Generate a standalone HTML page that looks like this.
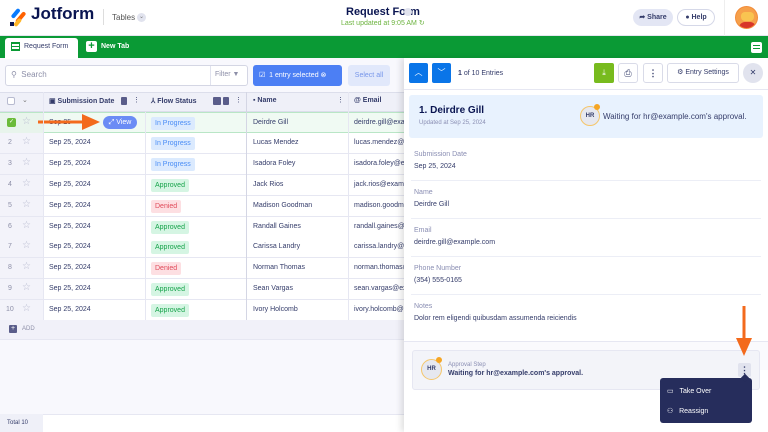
<!DOCTYPE html>
<html><head><meta charset="utf-8">
<style>
*{margin:0;padding:0;box-sizing:border-box}
body{width:768px;height:432px;overflow:hidden;position:relative;font-family:"Liberation Sans",sans-serif;background:#f8f8fd;color:#343c6a}
.a{position:absolute}
.t{font-size:7px;color:#343c6a;white-space:nowrap}
.row{position:absolute;left:0;width:420px;height:21px;border-bottom:1px solid #e6e7f2;background:#fff}
.row div{position:absolute;top:0;height:20px;line-height:20px;font-size:7px;white-space:nowrap}
.num{left:0;width:43px;background:#f3f3fa;color:#8d8fa8}
.num span{position:absolute;left:8px}
.num .star{left:22px;top:-1px;color:#b8bbd0;font-size:10px}
.pill{top:4px!important;height:13px!important;line-height:13px!important;padding:0 4px;border-radius:2px;font-size:7px}
.ip{background:#dbeafe;color:#4a8df5}
.ap{background:#d5f5e3;color:#16a34a}
.dn{background:#fddfe2;color:#e04b5a}
.lbl{font-size:7px;color:#8a8eb3}
.val{font-size:7px;color:#343c6a}
.hr{position:absolute;left:411px;width:350px;height:1px;background:#eceef6}
.btn{position:absolute;border:1px solid #d9dbe8;border-radius:3px;background:#fff}
</style></head><body>
<div class="a" style="left:0;top:0;width:768px;height:36px;background:#fff;border-bottom:1px solid #e5e6ef"></div>
<svg class="a" style="left:9px;top:7px" width="18" height="20" viewBox="0 0 18 20">
<rect x="5" y="1" width="4" height="11" rx="2" transform="rotate(40 7 6)" fill="#0a7cff"/>
<rect x="10" y="4" width="4" height="13" rx="2" transform="rotate(40 12 10)" fill="#ff6100"/>
<rect x="7" y="11" width="4" height="9" rx="2" transform="rotate(40 9 15)" fill="#ffb629"/>
<rect x="1" y="15" width="4" height="4" fill="#0a1551"/>
</svg>
<div class="a" style="left:31px;top:4px;font-size:17px;font-weight:bold;color:#0a1551">Jotform</div>
<div class="a" style="left:103px;top:9px;width:1px;height:16px;background:#ddd"></div>
<div class="a t" style="left:112px;top:13px;font-size:8px;color:#555">Tables</div>
<div class="a" style="left:137px;top:13px;width:9px;height:9px;border-radius:50%;background:#e1e3ee;font-size:6px;text-align:center;color:#777;line-height:9px">⌄</div>
<div class="a" style="left:346px;top:6px;font-size:11px;font-weight:bold;color:#0a1551">Request Form</div>
<div class="a" style="left:404px;top:8px;width:8px;height:8px;border-radius:50%;background:#e1e3ee"></div>
<div class="a" style="left:341px;top:19px;font-size:7px;color:#6cb33f">Last updated at 9:05 AM ↻</div>
<div class="a" style="left:633px;top:9px;width:40px;height:17px;border-radius:9px;background:#e3e6f4;font-size:7px;font-weight:bold;color:#343c6a;line-height:17px;text-align:center">➦ Share</div>
<div class="a" style="left:677px;top:9px;width:38px;height:17px;border-radius:9px;background:#fff;border:1px solid #d5d8e8;font-size:7px;font-weight:bold;color:#343c6a;line-height:15px;text-align:center">● Help</div>
<div class="a" style="left:724px;top:0;width:1px;height:36px;background:#eee"></div>
<div class="a" style="left:735px;top:6px;width:23px;height:23px;border-radius:50%;background:#f6a04a;border:1px solid #f28c3a;overflow:hidden"><div style="margin:5px 0 0 5px;width:13px;height:9px;background:#f9c451;border-radius:4px"></div><div style="margin:1px 0 0 3px;width:17px;height:8px;background:#d8352a;border-radius:6px 6px 0 0"></div></div>
<div class="a" style="left:0;top:36px;width:768px;height:22px;background:#0a9a35"></div>
<div class="a" style="left:5px;top:38px;width:73px;height:21px;background:#fff;border-radius:3px 3px 0 0"></div>
<div class="a" style="left:11px;top:42px;width:9px;height:9px;border:1px solid #0a9a35;background:repeating-linear-gradient(0deg,#0a9a35 0 1px,#fff 1px 3px)"></div>
<div class="a t" style="left:24px;top:43px;font-size:7px">Request Form</div>
<div class="a" style="left:86px;top:41px;width:11px;height:11px;background:#fff;border-radius:2px;color:#0a9a35;font-size:11px;line-height:10px;text-align:center;font-weight:bold">+</div>
<div class="a" style="left:101px;top:43px;font-size:7px;color:#fff;font-weight:bold">New Tab</div>
<div class="a" style="left:751px;top:42px;width:11px;height:11px;border-radius:2px;background:repeating-linear-gradient(0deg,#fff 0 2px,#0a9a35 2px 3px);border:2px solid #fff"></div>
<div class="a" style="left:5px;top:65px;width:243px;height:21px;background:#fff;border:1px solid #d4d6e4;border-radius:3px"></div>
<div class="a t" style="left:11px;top:70px;font-size:8px;color:#8d8fa8">⚲ &nbsp;Search</div>
<div class="a" style="left:210px;top:66px;width:1px;height:19px;background:#e0e2ee"></div>
<div class="a t" style="left:215px;top:71px;color:#8d8fa8">Filter ▼</div>
<div class="a" style="left:253px;top:65px;width:89px;height:21px;background:#4c7ff4;border-radius:3px"></div>
<div class="a" style="left:259px;top:71px;font-size:7px;color:#fff">☑ &nbsp;1 entry selected ⊗</div>
<div class="a" style="left:348px;top:65px;width:42px;height:21px;background:#e1e8fb;border-radius:3px;font-size:7px;color:#7796ea;line-height:21px;text-align:center">Select all</div>
<div class="a" style="left:0;top:92px;width:420px;height:20px;background:#eff0f8;border-bottom:1px solid #dcdeeb;border-top:1px solid #dcdeeb"></div>
<div class="a" style="left:7px;top:97px;width:8px;height:8px;border:1px solid #b8bbd0;border-radius:2px;background:#fff"></div>
<div class="a t" style="left:22px;top:96px;color:#777">⌄</div>
<div class="a t" style="left:49px;top:97px;font-weight:bold">▣ Submission Date</div>
<div class="a" style="left:121px;top:97px;width:6px;height:8px;background:#5a5d8a;border-radius:1px"></div>
<div class="a t" style="left:133px;top:96px">⋮</div>
<div class="a t" style="left:151px;top:97px;font-weight:bold">⅄ Flow Status</div>
<div class="a" style="left:213px;top:97px;width:8px;height:8px;background:#5a5d8a;border-radius:1px"></div>
<div class="a" style="left:223px;top:97px;width:6px;height:8px;background:#5a5d8a;border-radius:1px"></div>
<div class="a t" style="left:235px;top:96px">⋮</div>
<div class="a t" style="left:253px;top:97px;font-weight:bold">▪ Name</div>
<div class="a t" style="left:337px;top:96px">⋮</div>
<div class="a t" style="left:354px;top:97px;font-weight:bold">@ Email</div>
<div class="row" style="top:112px;background:#f0faf3;border-top:1px solid #b9e6c6;border-bottom:1px solid #b9e6c6"><div class="num" style="background:#e8f4ec"><span style="left:7px;top:5px;width:9px;height:9px;background:#6bbb3a;border-radius:2px;line-height:9px;color:#fff;text-align:center;font-size:6px">✓</span><span class="star">☆</span></div><div style="left:49px;color:#343c6a">Sep 25</div><div class="pill ip" style="left:151px">In Progress</div><div style="left:253px">Deirdre Gill</div><div style="left:354px">deirdre.gill@example.com</div></div>
<div class="a" style="left:103px;top:116px;width:34px;height:13px;border-radius:7px;background:#6b8cf5;color:#fff;font-size:7px;line-height:13px;text-align:center">⤢ View</div>
<svg class="a" style="left:38px;top:114px" width="62" height="16"><rect x="0" y="6.5" width="46" height="3" fill="#f36a1c"/><polygon points="44,0 62,8 44,16" fill="#f36a1c"/></svg>
<div class="row" style="top:133px"><div class="num"><span>2</span><span class="star">☆</span></div><div style="left:49px">Sep 25, 2024</div><div class="pill ip" style="left:151px">In Progress</div><div style="left:253px">Lucas Mendez</div><div style="left:354px">lucas.mendez@example.com</div></div>
<div class="row" style="top:154px"><div class="num"><span>3</span><span class="star">☆</span></div><div style="left:49px">Sep 25, 2024</div><div class="pill ip" style="left:151px">In Progress</div><div style="left:253px">Isadora Foley</div><div style="left:354px">isadora.foley@example.com</div></div>
<div class="row" style="top:175px"><div class="num"><span>4</span><span class="star">☆</span></div><div style="left:49px">Sep 25, 2024</div><div class="pill ap" style="left:151px">Approved</div><div style="left:253px">Jack Rios</div><div style="left:354px">jack.rios@example.com</div></div>
<div class="row" style="top:196px"><div class="num"><span>5</span><span class="star">☆</span></div><div style="left:49px">Sep 25, 2024</div><div class="pill dn" style="left:151px">Denied</div><div style="left:253px">Madison Goodman</div><div style="left:354px">madison.goodman@example</div></div>
<div class="row" style="top:217px"><div class="num"><span>6</span><span class="star">☆</span></div><div style="left:49px">Sep 25, 2024</div><div class="pill ap" style="left:151px">Approved</div><div style="left:253px">Randall Gaines</div><div style="left:354px">randall.gaines@example</div></div>
<div class="row" style="top:237px"><div class="num"><span>7</span><span class="star">☆</span></div><div style="left:49px">Sep 25, 2024</div><div class="pill ap" style="left:151px">Approved</div><div style="left:253px">Carissa Landry</div><div style="left:354px">carissa.landry@example</div></div>
<div class="row" style="top:258px"><div class="num"><span>8</span><span class="star">☆</span></div><div style="left:49px">Sep 25, 2024</div><div class="pill dn" style="left:151px">Denied</div><div style="left:253px">Norman Thomas</div><div style="left:354px">norman.thomas@example</div></div>
<div class="row" style="top:279px"><div class="num"><span>9</span><span class="star">☆</span></div><div style="left:49px">Sep 25, 2024</div><div class="pill ap" style="left:151px">Approved</div><div style="left:253px">Sean Vargas</div><div style="left:354px">sean.vargas@example.com</div></div>
<div class="row" style="top:300px"><div class="num"><span style="left:6px">10</span><span class="star">☆</span></div><div style="left:49px">Sep 25, 2024</div><div class="pill ap" style="left:151px">Approved</div><div style="left:253px">Ivory Holcomb</div><div style="left:354px">ivory.holcomb@example.com</div></div>
<div class="a" style="left:145px;top:112px;width:1px;height:208px;background:#e6e7f2"></div>
<div class="a" style="left:246px;top:92px;width:1px;height:228px;background:#d4d6e4"></div>
<div class="a" style="left:348px;top:92px;width:1px;height:228px;background:#e6e7f2"></div>
<div class="a" style="left:43px;top:92px;width:1px;height:228px;background:#e6e7f2"></div>
<div class="a" style="left:0;top:320px;width:420px;height:20px;background:#f1f1f9;border-bottom:1px solid #e6e7f2"></div>
<div class="a" style="left:9px;top:325px;width:8px;height:8px;background:#5a5d8a;border-radius:1px;color:#fff;font-size:7px;line-height:8px;text-align:center">+</div>
<div class="a t" style="left:22px;top:326px;font-size:6px;color:#8d8fa8">ADD</div>
<div class="a" style="left:0;top:414px;width:420px;height:18px;background:#fff;border-top:1px solid #e6e7f2"></div>
<div class="a" style="left:0;top:414px;width:43px;height:18px;background:#eff0f8"></div>
<div class="a t" style="left:7px;top:420px;font-size:6px">Total 10</div>
<div class="a" style="left:404px;top:58px;width:364px;height:374px;background:#fff;box-shadow:-3px 0 6px rgba(0,0,0,.12)"></div>
<div class="a" style="left:404px;top:89px;width:364px;height:1px;background:#e6e7f2"></div>
<div class="a" style="left:409px;top:63px;width:19px;height:20px;background:#0a75e8;border-radius:2px;color:#fff;font-size:8px;text-align:center;line-height:20px">︿</div>
<div class="a" style="left:432px;top:63px;width:19px;height:20px;background:#0a75e8;border-radius:2px;color:#fff;font-size:8px;text-align:center;line-height:20px">﹀</div>
<div class="a t" style="left:458px;top:70px"><b>1</b> of 10 Entries</div>
<div class="a" style="left:594px;top:63px;width:20px;height:20px;background:#78bb1e;border-radius:2px;color:#fff;font-size:8px;text-align:center;line-height:20px">⤓</div>
<div class="btn" style="left:618px;top:63px;width:20px;height:20px;font-size:9px;text-align:center;line-height:18px">⎙</div>
<div class="btn" style="left:643px;top:63px;width:20px;height:20px;font-size:9px;text-align:center;line-height:18px;font-weight:bold">⋮</div>
<div class="btn" style="left:667px;top:63px;width:72px;height:20px;font-size:7px;text-align:center;line-height:18px;color:#343c6a">⚙ Entry Settings</div>
<div class="a" style="left:743px;top:63px;width:20px;height:20px;border-radius:50%;background:#e1e3ee;font-size:8px;text-align:center;line-height:20px;color:#343c6a">✕</div>
<div class="a" style="left:409px;top:95px;width:354px;height:43px;background:#e8f2fe;border-radius:3px"></div>
<div class="a" style="left:419px;top:105px;font-size:10px;font-weight:bold;color:#0a1551">1. Deirdre Gill</div>
<div class="a t" style="left:419px;top:120px;font-size:6px;color:#8a8eb3">Updated at Sep 25, 2024</div>
<div class="a" style="left:580px;top:106px;width:20px;height:20px;border-radius:50%;background:#e6e8f0;border:1px solid #f5c66a;font-size:6px;font-weight:bold;text-align:center;line-height:18px;color:#343c6a">HR</div>
<div class="a" style="left:594px;top:104px;width:6px;height:6px;border-radius:50%;background:#f5a524"></div>
<div class="a t" style="left:603px;top:112px;font-size:8px">Waiting for hr@example.com's approval.</div>
<div class="a lbl" style="left:414px;top:151px">Submission Date</div><div class="a val" style="left:414px;top:163px">Sep 25, 2024</div>
<div class="hr" style="top:180px"></div>
<div class="a lbl" style="left:414px;top:189px">Name</div><div class="a val" style="left:414px;top:201px">Deirdre Gill</div>
<div class="hr" style="top:218px"></div>
<div class="a lbl" style="left:414px;top:227px">Email</div><div class="a val" style="left:414px;top:239px">deirdre.gill@example.com</div>
<div class="hr" style="top:256px"></div>
<div class="a lbl" style="left:414px;top:265px">Phone Number</div><div class="a val" style="left:414px;top:277px">(354) 555-0165</div>
<div class="hr" style="top:294px"></div>
<div class="a lbl" style="left:414px;top:303px">Notes</div><div class="a val" style="left:414px;top:315px">Dolor rem eligendi quibusdam assumenda reiciendis</div>
<div class="a" style="left:404px;top:341px;width:364px;height:1px;background:#e6e7f2"></div>
<div class="a" style="left:404px;top:342px;width:364px;height:28px;background:#fafafd"></div>
<div class="a" style="left:412px;top:350px;width:348px;height:40px;background:#f3f4f9;border:1px solid #e6e7f2;border-radius:3px"></div>
<div class="a" style="left:421px;top:359px;width:21px;height:21px;border-radius:50%;background:#e6e8f0;border:1px solid #f5c66a;font-size:6px;font-weight:bold;text-align:center;line-height:19px;color:#343c6a">HR</div>
<div class="a" style="left:436px;top:357px;width:6px;height:6px;border-radius:50%;background:#f5a524"></div>
<div class="a t" style="left:448px;top:362px;font-size:6px;color:#8a8eb3">Approval Step</div>
<div class="a t" style="left:448px;top:370px;font-weight:bold">Waiting for hr@example.com's approval.</div>
<div class="a" style="left:738px;top:363px;width:13px;height:14px;background:#e1e3ee;border-radius:2px;font-size:9px;text-align:center;line-height:14px;font-weight:bold">⋮</div>
<svg class="a" style="left:736px;top:306px" width="16" height="50"><rect x="6.5" y="0" width="3" height="36" fill="#f36a1c"/><polygon points="0,32 16,32 8,50" fill="#f36a1c"/></svg>
<div class="a" style="left:660px;top:378px;width:92px;height:45px;background:#262d5c;border-radius:3px"></div>
<div class="a" style="left:742px;top:375px;width:6px;height:6px;background:#262d5c;transform:rotate(45deg)"></div>
<div class="a t" style="left:667px;top:387px;color:#fff;font-size:7px">▭ &nbsp;&nbsp;Take Over</div>
<div class="a t" style="left:667px;top:407px;color:#fff;font-size:7px">⚇ &nbsp;&nbsp;Reassign</div>
</body></html>
